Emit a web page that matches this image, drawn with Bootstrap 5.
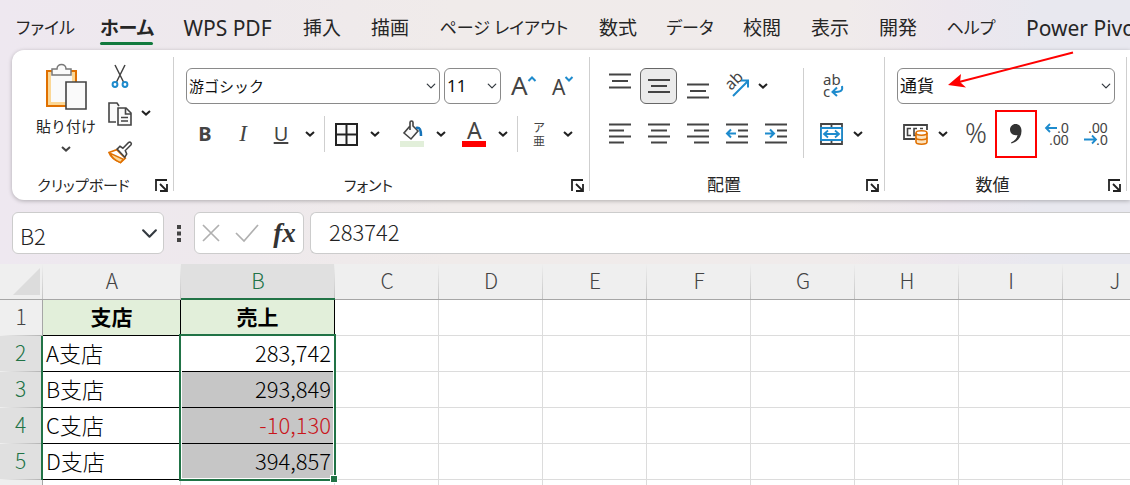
<!DOCTYPE html>
<html lang="ja">
<head>
<meta charset="utf-8">
<meta name="viewport" content="width=device-width, initial-scale=1">
<title>支店売上</title>
<link href="https://cdn.jsdelivr.net/npm/bootstrap@5.3.0/dist/css/bootstrap.min.css" rel="stylesheet">
<style>
  :root { --xl-green: #217346; --ink: #262626; --icon: #444; --edge: #8a8a8a; }
  body {
    font-family: "Noto Sans", "Noto Sans CJK JP", sans-serif;
    font-feature-settings: "palt";
    color: var(--ink);
    background: linear-gradient(90deg, #eee8f0 0, #eee9ec 22%, #f0ebea 40%, #f0ebeb 75%, #ede7ee 84%, #e8e8ef 92%);
  }
  button { color: var(--ink); background: none; border: 0; padding: 0; }
  svg { display: block; fill: none; stroke: var(--icon); overflow: visible; }
  svg text { fill: var(--icon); stroke: none; }

  /* ribbon tabs */
  .tabs { display: grid; grid-template-columns: 83px 80px 121px 68px 68px 160px 68px 76px 68px 68px 68px 78px 140px; height: 50px; padding: 8px 0 0 4px; margin: 0; list-style: none; }
  .tabs a { position: relative; display: block; font-size: 19px; line-height: 40px; text-align: center; white-space: nowrap; color: var(--ink); text-decoration: none; }
  .tabs .kana { font-size: 17px; }
  .tabs .latin { font-size: 21px; }
  .tabs .active { font-weight: 700; }
  .tabs .active::after { content: ""; position: absolute; left: 13px; right: 14px; bottom: 3px; height: 3px; border-radius: 2px; background: #127a3e; }

  /* ribbon */
  .ribbon { height: 150px; margin-left: 12px; border-radius: 12px 0 0 12px; background: #fff; box-shadow: 0 1px 4px #0004; }
  .group { position: relative; height: 134px; margin-top: 7px; padding-top: 11px; border-right: 1px solid #cfcfcf; }
  .g-clip { width: 162px; padding-top: 0; } .g-font { width: 416px; } .g-align { width: 295px; } .g-num { width: 242px; }
  .caption { height: 12px; font-size: 17px; line-height: 12px; padding-right: 5px; }
  .caption .kana { font-size: 15px; }
  .caption button { width: 13px; }
  .tool { display: flex; align-items: center; justify-content: center; width: 39px; height: 36px; flex: none; }
  .g-clip .tool { width: 32px; height: 38px; }
  .g-font .tool { width: 38px; }
  .drop { display: flex; align-items: center; justify-content: center; width: 20px; height: 36px; flex: none; }
  .drop.tight { width: 14px; }
  .g-num .drop { width: 14px; margin-right: 6px; }
  .drop svg { stroke: #222; stroke-width: 2; }
  .row-a { height: 36px; } .row-b { height: 48px; margin-top: 6px; }
  .rule { width: 1px; height: 36px; background: #cfcfcf; flex: none; }
  .g-font .rule { margin: 0 2px 0 4px; }
  .combo { height: 36px; padding: 0 16px 0 2px; border: 1px solid var(--edge); border-radius: 6px; color: #111; font-size: 17px; background-color: #fff; background-position: right 3px center; background-size: 10px; }
  .font-name { width: 254px; font-size: 15px; } .font-size { width: 57px; } .format { width: 218px; }
  .letter { font-size: 20px; line-height: 24px; color: var(--icon); }
  .italic-i { font-family: "Liberation Serif", serif; font-style: italic; font-size: 23px; }
  .tool.pressed { width: 37px; margin: 0 1px; border: 1px solid #666; border-radius: 6px; background: #ebebeb; }
  .tool.marked { width: 42px; height: 48px; border: 2px solid #f00; }
  .paste { width: 76px; padding-top: 5px; font-size: 15px; line-height: 24px; }
  .align-tools { padding-left: 10px; }
  .arrow { position: absolute; left: 60px; top: -6px; }

  /* formula bar */
  .bar { height: 42px; margin: 12px 0 10px 12px; font-family: "Noto Sans CJK JP", sans-serif; font-feature-settings: normal; }
  .box { height: 42px; border: 1px solid #ccc; border-radius: 6px; background-color: #fff; color: #222; }
  .name-box { width: 152px; padding: 4px 24px 0 7px; font-size: 22px; font-weight: 300; background-position: right 5px center; background-size: 17px; }
  .grip { margin: 0 13px; }
  .fx-box { width: 110px; margin-right: 6px; }
  .fx { font: italic 700 27px/36px "Liberation Serif", serif; color: #333; }
  .formula { border-right: 0; border-radius: 6px 0 0 6px; padding: 0 18px 4px; font-size: 22px; font-weight: 300; }

  /* sheet */
  .sheet { background: #fff; font-family: "Noto Sans CJK JP", sans-serif; font-feature-settings: normal; }
  .grid { width: 1167px; table-layout: fixed; border-collapse: separate; border-spacing: 0; font-size: 22px; line-height: 30px; font-weight: 300; color: #000; }
  .grid th, .grid td { height: 36px; padding: 0 3px 4px; border-right: 1px solid #dcdcdc; border-bottom: 1px solid #dcdcdc; white-space: nowrap; }
  .grid th { font-size: 21px; font-weight: 300; text-align: center; }
  .grid thead th { color: #444; border-right: 0; border-bottom-color: #a6a6a6; background: linear-gradient(#efefef, #c4c4c4) right / 1px 100% no-repeat #efefef; }
  .grid tbody th { color: #444; border-bottom: 0; border-right-color: #a6a6a6; background: linear-gradient(90deg, #efefef, #b4b4b4) bottom / 100% 1px no-repeat #efefef; }
  .grid thead th.on { color: var(--xl-green); border-bottom: 2px solid var(--xl-green); padding-bottom: 3px; background-color: #e0e0e0; }
  .grid tbody th.on { color: var(--xl-green); border-right: 2px solid var(--xl-green); background-color: #e0e0e0; }
  .grid td.data { border-color: #000; }
  .grid td.head { font-size: 21px; font-weight: 700; text-align: center; background: #e2efda; }
  .grid td.picked { background: #c6c6c6; }
  .grid td.minus { color: #c9151b; }
  .origin { position: relative; }
  .selection { position: absolute; left: -2px; top: -2px; width: 157px; height: 147px; border: 2px solid var(--xl-green); box-shadow: inset 0 0 0 1px #fff; }
  .selection::after { content: ""; position: absolute; right: -4px; bottom: -4px; width: 8px; height: 8px; border: 1px solid #fff; background: var(--xl-green); }
</style>
</head>
<body class="d-flex flex-column vh-100 overflow-hidden">
<svg width="0" height="0" class="position-absolute" aria-hidden="true">
  <symbol id="chev" viewBox="0 0 10 6"><path d="M1 1l4 3.600L9 1"/></symbol>
  <symbol id="launch" viewBox="0 0 13 13"><path d="M1 12V1h11M5 5l6 6M12 5v7H5" stroke="#222" stroke-width="1.800"/></symbol>
</svg>

<nav aria-label="リボン タブ">
  <ul class="tabs">
    <li><a href="#" class="kana">ファイル</a></li><li><a href="#" class="active" aria-current="page">ホーム</a></li><li><a href="#" class="latin">WPS PDF</a></li>
    <li><a href="#">挿入</a></li><li><a href="#">描画</a></li><li><a href="#" class="kana">ページ レイアウト</a></li><li><a href="#">数式</a></li>
    <li><a href="#" class="kana">データ</a></li><li><a href="#">校閲</a></li><li><a href="#">表示</a></li><li><a href="#">開発</a></li>
    <li><a href="#" class="kana">ヘルプ</a></li><li><a href="#" class="latin text-start ps-3">Power Pivot</a></li>
  </ul>
</nav>

<div class="ribbon d-flex flex-shrink-0">
  <section class="group g-clip d-flex flex-column flex-shrink-0">
    <div class="d-flex ps-3">
      <button class="paste d-flex flex-column align-items-center">
        <svg width="42" height="48" viewBox="0 0 42 48">
          <path d="M2 9h29v35H2z" fill="#fbd795" stroke="#e07000" stroke-width="2"/>
          <path d="M6 11h21v29H6z" fill="#fafafa" stroke="none"/>
          <path d="M7 13V7h5c0-6 9-6 9 0h5v6z" fill="#fafafa" stroke="#777" stroke-width="1.500"/>
          <path d="M21 20h20v27H21z" fill="#fafafa" stroke-width="1.600"/>
        </svg>
        <span class="mt-1">貼り付け</span>
        <svg class="mt-2" width="10" height="6" stroke-width="2"><use href="#chev"/></svg>
      </button>
      <div class="d-flex flex-column">
        <button class="tool" aria-label="切り取り"><svg width="18" height="24" viewBox="0 0 18 24"><path d="M4 1l8.500 17M14 1L5.500 18" stroke-width="1.500"/><circle cx="4" cy="20.500" r="2.400" stroke="#1e8bcd" stroke-width="2"/><circle cx="14" cy="20.500" r="2.400" stroke="#1e8bcd" stroke-width="2"/></svg></button>
        <div class="d-flex">
          <button class="tool" aria-label="コピー"><svg width="24" height="24" viewBox="0 0 24 24" stroke-width="1.600"><path d="M8 20H1V1h8l2 3" fill="#fafafa"/><path d="M10 6h8l5 5v12H10z" fill="#fafafa"/><path d="M17.500 6v6H23M13 15.500h7M13 19h7"/></svg></button>
          <button class="drop" aria-label="コピーのオプション"><svg width="10" height="6"><use href="#chev"/></svg></button>
        </div>
        <button class="tool" aria-label="書式のコピー"><svg width="24" height="23" viewBox="0 0 25 23"><path d="M1 11.500l8-3 9 9-5 4.500C8 20 3 17 1 11.500z" fill="#fff" stroke="#e07000" stroke-width="1.700"/><path d="M2.500 12.500l13.500 6-3 3.500C8 20 4 17 2.500 12.500z" fill="#fbd795" stroke="#e07000" stroke-width="1.500"/><path d="M9.500 8l3-3 3 2 6-6c2-1 3.500 1 2.500 2.500l-6 6 1.500 3.500-2 3.500z" fill="#fff" stroke-width="1.600"/></svg></button>
      </div>
    </div>
    <div class="caption d-flex align-items-center mt-auto"><span class="kana flex-fill text-center">クリップボード</span><button aria-label="クリップボードの設定"><svg width="13" height="13"><use href="#launch"/></svg></button></div>
  </section>

  <section class="group g-font d-flex flex-column flex-shrink-0">
    <div class="row-a d-flex align-items-center ps-2 ms-1">
      <select class="form-select combo font-name me-1" aria-label="フォント"><option>游ゴシック</option></select>
      <select class="form-select combo font-size" aria-label="フォント サイズ"><option>11</option></select>
      <button class="tool ms-1" aria-label="フォント サイズの拡大"><svg width="26" height="24" viewBox="0 0 26 24"><text x="0" y="21" font-size="26">A</text><path d="M17.500 7l3.500-3.500L24.500 7" stroke="#1e8bcd" stroke-width="2"/></svg></button>
      <button class="tool" aria-label="フォント サイズの縮小"><svg width="20" height="24" viewBox="0 0 20 24"><text x="0" y="21" font-size="21">A</text><path d="M13.500 3l3.500 3.500L20.500 3" stroke="#1e8bcd" stroke-width="2"/></svg></button>
    </div>
    <div class="row-b d-flex align-items-center ps-2 ms-1">
      <button class="tool letter fw-bold" aria-label="太字">B</button>
      <button class="tool letter italic-i" aria-label="斜体">I</button>
      <button class="tool letter text-decoration-underline" aria-label="下線">U</button>
      <button class="drop" aria-label="下線のオプション"><svg width="10" height="6"><use href="#chev"/></svg></button>
      <span class="rule"></span>
      <button class="tool" aria-label="罫線"><svg width="23" height="23" viewBox="0 0 23 23"><path d="M1 1h21v21H1zM11.500 1v21M1 11.500h21" fill="#fafafa" stroke="#222" stroke-width="2"/></svg></button>
      <button class="drop" aria-label="罫線のオプション"><svg width="10" height="6"><use href="#chev"/></svg></button>
      <button class="tool ms-2" aria-label="塗りつぶしの色"><svg width="24" height="26" viewBox="0 0 24 26"><path d="M0 20h24v6H0z" fill="#e2efda" stroke="none"/><path d="M10 5l-6 7 7 6 7-8-5-5V1.500c0-2-3-2-3 0V9" fill="#fafafa" stroke-width="1.600"/><path d="M16 7c4-1 5 2 5 8" stroke="#1673b8" stroke-width="2.500"/></svg></button>
      <button class="drop" aria-label="塗りつぶしのオプション"><svg width="10" height="6"><use href="#chev"/></svg></button>
      <button class="tool ms-1" aria-label="フォントの色"><svg width="24" height="26" viewBox="0 0 24 26"><text x="5" y="18" font-size="23">A</text><path d="M0 20h24v6H0z" fill="#f00" stroke="none"/></svg></button>
      <button class="drop" aria-label="フォントの色のオプション"><svg width="10" height="6"><use href="#chev"/></svg></button>
      <span class="rule"></span>
      <button class="tool" aria-label="ふりがな"><svg width="14" height="26" viewBox="0 0 14 26"><text font-size="12"><tspan x="1" y="11">ア</tspan><tspan x="1" y="25">亜</tspan></text></svg></button>
      <button class="drop" aria-label="ふりがなのオプション"><svg width="10" height="6"><use href="#chev"/></svg></button>
    </div>
    <div class="caption d-flex align-items-center mt-auto"><span class="kana flex-fill text-center pe-2">フォント</span><button aria-label="フォントの設定"><svg width="13" height="13"><use href="#launch"/></svg></button></div>
  </section>

  <section class="group g-align d-flex flex-column flex-shrink-0">
    <div class="align-tools d-flex">
      <div>
        <div class="row-a d-flex align-items-center">
          <button class="tool" aria-label="上揃え"><svg width="22" height="24" viewBox="0 0 22 24" stroke-width="1.800"><path d="M0 .5h22M3 7h16M0 13.500h22"/></svg></button>
          <button class="tool pressed" aria-label="上下中央揃え"><svg width="22" height="14" viewBox="0 0 22 14" stroke-width="1.800"><path d="M0 1h22M3 7h16M0 13h22"/></svg></button>
          <button class="tool" aria-label="下揃え"><svg width="22" height="24" viewBox="0 0 22 24" stroke-width="1.800"><path d="M0 10.500h22M3 17h16M0 23.500h22"/></svg></button>
          <button class="tool" aria-label="方向"><svg width="26" height="26" viewBox="0 0 26 26"><text x="7" y="18" font-size="16" transform="rotate(-45 7 18)">ab</text><path d="M9 23L24 8M17 7.500h7v7" stroke="#1e8bcd" stroke-width="2"/></svg></button>
          <button class="drop tight" aria-label="方向のオプション"><svg width="10" height="6"><use href="#chev"/></svg></button>
        </div>
        <div class="row-b d-flex align-items-center">
          <button class="tool" aria-label="左揃え"><svg width="22" height="20" viewBox="0 0 22 20" stroke-width="1.800"><path d="M0 .5h22M0 6.500h15M0 12.500h22M0 18.500h15"/></svg></button>
          <button class="tool" aria-label="中央揃え"><svg width="22" height="20" viewBox="0 0 22 20" stroke-width="1.800"><path d="M0 .5h22M3 6.500h16M0 12.500h22M3 18.500h16"/></svg></button>
          <button class="tool" aria-label="右揃え"><svg width="22" height="20" viewBox="0 0 22 20" stroke-width="1.800"><path d="M0 .5h22M7 6.500h15M0 12.500h22M7 18.500h15"/></svg></button>
          <button class="tool" aria-label="インデントを減らす"><svg width="22" height="20" viewBox="0 0 22 20" stroke-width="1.800"><path d="M0 .5h22M12 6.500h10M12 12.500h10M0 18.500h22"/><path d="M10 9.500H1M5 5.500l-4 4 4 4" stroke="#1e8bcd" stroke-width="2"/></svg></button>
          <button class="tool" aria-label="インデントを増やす"><svg width="22" height="20" viewBox="0 0 22 20" stroke-width="1.800"><path d="M0 .5h22M12 6.500h10M12 12.500h10M0 18.500h22"/><path d="M0 9.500h9M5 5.500l4 4-4 4" stroke="#1e8bcd" stroke-width="2"/></svg></button>
        </div>
      </div>
      <span class="rule h-auto ms-2"></span>
      <div class="ms-2">
        <button class="tool" aria-label="折り返して全体を表示する"><svg width="20" height="26" viewBox="0 0 20 26"><text font-size="15"><tspan x="1" y="12">ab</tspan><tspan x="1" y="24">c</tspan></text><path d="M20 13c1 5-1 6-9 6M15 14.500L10.500 19l4.500 4" stroke="#1e8bcd" stroke-width="2"/></svg></button>
        <div class="row-b d-flex align-items-center">
          <button class="tool" aria-label="セルを結合して中央揃え"><svg width="23" height="22" viewBox="0 0 23 22"><path d="M1 1h21v20H1zM11.500 1v20" fill="#fafafa" stroke-width="1.800"/><path d="M1 5h21v12H1z" fill="#fff" stroke="#1e8bcd" stroke-width="1.800"/><path d="M4 11h15M8 7.500L4 11l4 3.500M15 7.500l4 3.500-4 3.500" stroke="#1e8bcd" stroke-width="1.800"/></svg></button>
          <button class="drop tight" aria-label="結合のオプション"><svg width="10" height="6"><use href="#chev"/></svg></button>
        </div>
      </div>
    </div>
    <div class="caption d-flex align-items-center mt-auto"><span class="flex-fill text-center pe-2">配置</span><button aria-label="配置の設定"><svg width="13" height="13"><use href="#launch"/></svg></button></div>
  </section>

  <section class="group g-num d-flex flex-column flex-shrink-0">
    <div class="row-a d-flex align-items-center ps-2 ms-1">
      <select class="form-select combo format" aria-label="表示形式"><option>通貨</option></select>
    </div>
    <div class="row-b d-flex align-items-center ps-2 ms-1">
      <button class="tool" aria-label="通貨表示形式"><svg width="28" height="22" viewBox="0 0 28 22"><path d="M12 16H1V2h23v5" stroke-width="1.800"/><path d="M8 5.500H4.500v7H8M14 5.500h-3v7h2M17 5.500h3" stroke-width="1.600"/><path d="M13 10v9c0 3 11 3 11 0v-9" fill="#fbe3c0" stroke="#e07000" stroke-width="1.600"/><ellipse cx="18.500" cy="10" rx="5.500" ry="2.200" fill="#fff" stroke="#e07000" stroke-width="1.600"/><path d="M13 14.500c0 3 11 3 11 0" stroke="#e07000" stroke-width="1.600"/></svg></button>
      <button class="drop" aria-label="通貨のオプション"><svg width="10" height="6"><use href="#chev"/></svg></button>
      <button class="tool" aria-label="パーセント スタイル"><svg width="22" height="22" viewBox="0 0 22 22"><text x="0" y="20" font-size="27" font-weight="300">%</text></svg></button>
      <button class="tool marked" aria-label="桁区切りスタイル"><svg width="12" height="20" viewBox="0 0 12 20"><path d="M5.500 0c4 0 6 3 6 7 0 6-4 11-10 12.500l-.5-1c4-2 6-4.500 6.500-7.500C3 12 0 9 0 5.500 0 2.500 2.500 0 5.500 0z" fill="#333" stroke="none"/></svg></button>
      <button class="tool" aria-label="小数点以下の表示桁数を増やす"><svg width="24" height="24" viewBox="0 0 24 24"><text font-family="Liberation Sans" font-size="14"><tspan x="12" y="11">.0</tspan><tspan x="4" y="23">.00</tspan></text><path d="M12 6H1M5 2L1 6l4 4" stroke="#1e8bcd" stroke-width="1.800"/></svg></button>
      <button class="tool" aria-label="小数点以下の表示桁数を減らす"><svg width="24" height="24" viewBox="0 0 24 24"><text font-family="Liberation Sans" font-size="14"><tspan x="4" y="11">.00</tspan><tspan x="12" y="23">.0</tspan></text><path d="M0 17.500h12M8 13.500l4 4-4 4" stroke="#1e8bcd" stroke-width="1.800"/></svg></button>
    </div>
    <div class="caption d-flex align-items-center mt-auto"><span class="flex-fill text-center pe-2">数値</span><button aria-label="数値の設定"><svg width="13" height="13"><use href="#launch"/></svg></button></div>
    <svg class="arrow" width="130" height="40" viewBox="0 0 130 40" aria-hidden="true"><path d="M128 1.500L14 31" stroke="#f00" stroke-width="2"/><path d="M3 34l13-11-1 8 6 5.500z" fill="#f00" stroke="none"/></svg>
  </section>
</div>

<div class="bar d-flex flex-shrink-0">
  <select class="form-select box name-box flex-shrink-0" aria-label="名前ボックス"><option>B2</option></select>
  <svg class="grip align-self-center flex-shrink-0" width="4" height="17" viewBox="0 0 4 17" aria-hidden="true"><path d="M2 0v17" stroke-width="4" stroke-dasharray="4 2.500"/></svg>
  <div class="box fx-box d-flex align-items-center justify-content-around flex-shrink-0">
    <button aria-label="キャンセル"><svg width="18" height="18" viewBox="0 0 18 18"><path d="M1 1l16 16M17 1L1 17" stroke="#b0b0b0" stroke-width="1.700"/></svg></button>
    <button aria-label="入力"><svg width="24" height="18" viewBox="0 0 24 18"><path d="M1 9l8 8L23 1" stroke="#b0b0b0" stroke-width="1.700"/></svg></button>
    <button class="fx" aria-label="関数の挿入">fx</button>
  </div>
  <input class="box formula flex-fill" type="text" value="283742" aria-label="数式バー">
</div>

<main class="sheet flex-fill overflow-hidden">
  <table class="grid">
    <colgroup><col style="width:43px"><col style="width:138px"><col style="width:154px"><col span="8" style="width:104px"></colgroup>
    <thead><tr>
      <th><svg width="27" height="27" viewBox="0 0 27 27" class="ms-auto mt-1"><path d="M27 0v27H0z" fill="#dcdcdc" stroke="none"/></svg></th>
      <th scope="col">A</th><th scope="col" class="on">B</th><th scope="col">C</th><th scope="col">D</th><th scope="col">E</th><th scope="col">F</th><th scope="col">G</th><th scope="col">H</th><th scope="col">I</th><th scope="col">J</th>
    </tr></thead>
    <tbody>
      <tr><th scope="row">1</th><td class="data head">支店</td><td class="data head">売上</td><td></td><td></td><td></td><td></td><td></td><td></td><td></td><td></td></tr>
      <tr><th scope="row" class="on">2</th><td class="data">A支店</td><td class="data text-end origin">283,742<span class="selection"></span></td><td></td><td></td><td></td><td></td><td></td><td></td><td></td><td></td></tr>
      <tr><th scope="row" class="on">3</th><td class="data">B支店</td><td class="data text-end picked">293,849</td><td></td><td></td><td></td><td></td><td></td><td></td><td></td><td></td></tr>
      <tr><th scope="row" class="on">4</th><td class="data">C支店</td><td class="data text-end picked minus">-10,130</td><td></td><td></td><td></td><td></td><td></td><td></td><td></td><td></td></tr>
      <tr><th scope="row" class="on">5</th><td class="data">D支店</td><td class="data text-end picked">394,857</td><td></td><td></td><td></td><td></td><td></td><td></td><td></td><td></td></tr>
      <tr><th></th><td></td><td></td><td></td><td></td><td></td><td></td><td></td><td></td><td></td><td></td></tr>
    </tbody>
  </table>
</main>
<script src="https://cdn.jsdelivr.net/npm/bootstrap@5.3.0/dist/js/bootstrap.bundle.min.js"></script>
</body>
</html>
